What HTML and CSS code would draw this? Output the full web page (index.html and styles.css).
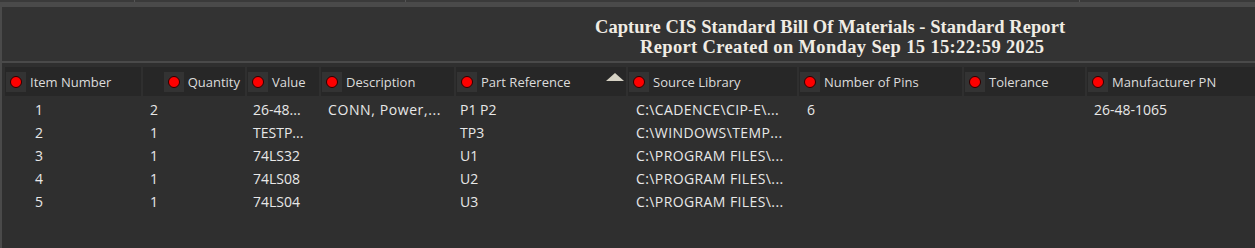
FILE: index.html
```html
<!DOCTYPE html>
<html>
<head>
<meta charset="utf-8">
<link rel="stylesheet" href="styles.css">
</head>
<body>
<div class="topstrip">
  <div class="tab t1"></div><div class="tab t2"></div><div class="tab t3"></div><div class="tab t4"></div>
</div>
<div class="frame">
  <div class="title">
    <div class="l1">Capture CIS Standard Bill Of Materials - Standard Report</div>
    <div class="l2">Report Created on Monday Sep 15 15:22:59 2025</div>
  </div>
  <div class="sep"></div>
  <div class="grid">
    <div class="hdr">
      <div class="hc"><span class="ic"><span class="dot"></span></span><span>Item Number</span></div>
      <div class="hc right"><span class="ic"><span class="dot"></span></span><span>Quantity</span></div>
      <div class="hc"><span class="ic"><span class="dot"></span></span><span>Value</span></div>
      <div class="hc"><span class="ic"><span class="dot"></span></span><span>Description</span></div>
      <div class="hc sort"><span class="ic"><span class="dot"></span></span><span>Part Reference</span><span class="tri"></span></div>
      <div class="hc"><span class="ic"><span class="dot"></span></span><span>Source Library</span></div>
      <div class="hc"><span class="ic"><span class="dot"></span></span><span>Number of Pins</span></div>
      <div class="hc"><span class="ic"><span class="dot"></span></span><span>Tolerance</span></div>
      <div class="hc"><span class="ic"><span class="dot"></span></span><span>Manufacturer PN</span></div>
    </div>
    <div class="row"><span class="c1">1</span><span class="c2">2</span><span class="c3">26-48...</span><span class="c4">CONN, Power,...</span><span class="c5">P1 P2</span><span class="c6">C:\CADENCE\CIP-E\...</span><span class="c7">6</span><span class="c8"></span><span class="c9">26-48-1065</span></div>
    <div class="row"><span class="c1">2</span><span class="c2">1</span><span class="c3">TESTP...</span><span class="c4"></span><span class="c5">TP3</span><span class="c6">C:\WINDOWS\TEMP...</span><span class="c7"></span><span class="c8"></span><span class="c9"></span></div>
    <div class="row"><span class="c1">3</span><span class="c2">1</span><span class="c3">74LS32</span><span class="c4"></span><span class="c5">U1</span><span class="c6">C:\PROGRAM FILES\...</span><span class="c7"></span><span class="c8"></span><span class="c9"></span></div>
    <div class="row"><span class="c1">4</span><span class="c2">1</span><span class="c3">74LS08</span><span class="c4"></span><span class="c5">U2</span><span class="c6">C:\PROGRAM FILES\...</span><span class="c7"></span><span class="c8"></span><span class="c9"></span></div>
    <div class="row"><span class="c1">5</span><span class="c2">1</span><span class="c3">74LS04</span><span class="c4"></span><span class="c5">U3</span><span class="c6">C:\PROGRAM FILES\...</span><span class="c7"></span><span class="c8"></span><span class="c9"></span></div>
  </div>
</div>
</body>
</html>
```

FILE: styles.css
```css
html, body {
  margin: 0;
  padding: 0;
  background: #2f2f2f;
  width: 1255px;
  height: 248px;
  overflow: hidden;
  font-family: "Open Sans", "Noto Sans", sans-serif;
  font-size: 13px;
  color: #e2e2e2;
}
.topstrip {
  height: 2px;
  display: flex;
  background: #3a3a3a;
}
.tab { height: 2px; border-right: 1px solid #555; }
.t1 { width: 134px; }
.t2 { width: 270px; }
.t3 { width: 673px; }
.t4 { flex: 1; border-right: none; }
.frame {
  border-top: 5px solid #4a4a4a;
  border-left: 2px solid #4a4a4a;
  height: 241px;
  background: #2f2f2f;
}
.title {
  height: 54px;
  background: #333333;
  box-sizing: border-box;
  padding: 10px 0 0 0;
  font-family: "Liberation Serif", serif;
  font-weight: bold;
  font-size: 18.5px;
  line-height: 20px;
  color: #f0ece4;
  white-space: nowrap;
}
.title .l1 { padding-left: 593px; letter-spacing: 0.05px; }
.title .l2 { padding-left: 638px; letter-spacing: 0.35px; }
.sep {
  height: 2px;
  background: #4a4a4a;
}
.grid {
  padding-top: 4px;
}
.hdr, .row {
  display: grid;
  grid-template-columns: 136px 102px 72px 133px 170px 169px 163px 121px 1fr;
  column-gap: 2px;
  padding-left: 3px;
}
.hc {
  height: 29px;
  background: #272727;
  display: flex;
  align-items: center;
  gap: 4px;
  padding-left: 1px;
  box-sizing: border-box;
  color: #dcdcdc;
  white-space: nowrap;
  overflow: hidden;
}
.hc.right { justify-content: flex-end; padding-right: 5px; gap: 4px; }
.hc.sort { position: relative; }
.ic {
  width: 20px;
  height: 20px;
  background: #333333;
  display: flex;
  align-items: center;
  justify-content: center;
  flex: none;
}
.dot {
  width: 10px;
  height: 10px;
  border-radius: 50%;
  background: #ff0000;
  border: 1px solid #2a0000;
}
.tri {
  position: absolute;
  right: 2px;
  top: 6px;
  width: 0;
  height: 0;
  border-left: 9px solid transparent;
  border-right: 9px solid transparent;
  border-bottom: 8px solid #d6d2c4;
}
.hdr { margin-bottom: 2px; }
.row {
  height: 23px;
  line-height: 23px;
  white-space: nowrap;
  font-size: 14px;
  color: #e8e8e8;
}
.row span { overflow: hidden; }
.c1 { padding-left: 30px; }
.c2 { padding-left: 7px; }
.c3 { padding-left: 6px; }
.c4 { padding-left: 7px; letter-spacing: 0.6px; }
.c5 { padding-left: 4px; }
.c6 { padding-left: 8px; letter-spacing: 0.4px; }
.c7 { padding-left: 8px; }
.c9 { padding-left: 7px; }
```
